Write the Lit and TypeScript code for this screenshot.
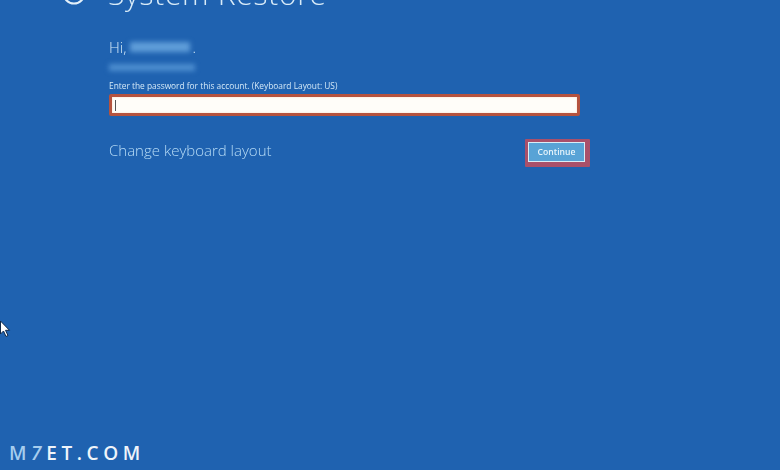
import { LitElement, html, css } from "lit";
import { customElement } from "lit/decorators.js";

@customElement("app-root")
export class AppRoot extends LitElement {
  static styles = css`
    :host { display: block; width: 780px; height: 470px; overflow: hidden; position: relative; background: #1f62b0; font-family: "Open Sans", "Noto Sans", sans-serif; color: #cfe6f7; }
    .page { display: flex; flex-direction: column; align-items: flex-start; padding-left: 62px; height: 470px; box-sizing: border-box; filter: blur(0.4px); }
    .header { display: flex; align-items: center; gap: 22px; height: 36px; margin-top: -24px; flex: none; }
    .back { width: 24px; height: 24px; flex: none; display: block; margin-top: -2px; }
    .title { font-size: 30px; font-weight: 300; line-height: 36px; color: #d8ebf8; letter-spacing: 0.7px; white-space: nowrap; }
    .form { margin-left: 47px; width: 481px; display: flex; flex-direction: column; margin-top: 25px; }
    .hi { display: flex; align-items: center; font-size: 15px; font-weight: 300; line-height: 20px; color: #d3e8f7; height: 20px; }
    .name { width: 60px; height: 10px; background: #5f9dd9; filter: blur(2.5px); margin-left: 4px; margin-right: 2px; }
    .mail { width: 86px; height: 7px; background: #4d8ed0; filter: blur(2.5px); margin-top: 7px; }
    .hint { font-size: 8.35px; line-height: 10px; margin-top: 10px; color: #d3e8f7; white-space: nowrap; }
    .input { box-sizing: border-box; width: 471px; height: 22px; margin-top: 3px; background: #fffdf9; border: 3px solid #b5533f; border-radius: 2px; box-shadow: inset 0 0 2px #f7d9bf; display: flex; align-items: center; padding-left: 3px; }
    .caret { width: 1px; height: 11px; background: #555; }
    .row { display: flex; justify-content: space-between; align-items: flex-start; margin-top: 23px; }
    .change { font-size: 15px; line-height: 20px; font-weight: 300; color: #b7dcf6; white-space: nowrap; margin-top: 1px; }
    .btnwrap { border-style: solid; border-color: #a9506a; border-width: 3px 5px 5px 3px; border-radius: 1px; flex: none; display: flex; }
    .btn { box-sizing: border-box; width: 57px; height: 20px; background: #58a3d6; border: 1px solid #d9eef7; color: #e8f5fb; font-size: 8.6px; font-weight: 600; display: flex; align-items: center; justify-content: center; font-family: inherit; padding: 0; }
    .mark { position: absolute; left: 9px; top: 441px; font-family: "Open Sans", sans-serif; font-weight: 600; font-size: 19px; line-height: 24px; letter-spacing: 4.6px; color: #eef4fa; white-space: nowrap; }
    .mark .m { color: #a6cdee; }
    .mark .s { color: #a6cdee; font-style: italic; }
    .cursor { position: absolute; left: 0; top: 320px; width: 11px; height: 18px; }
  `;

  render() {
    return html`
      <div class="page">
        <div class="header">
          <svg class="back" viewBox="0 0 24 24" fill="none" stroke="#e3f0fa" stroke-width="2"><circle cx="12" cy="12" r="10.5"></circle><path d="M6 12h12M11 7l-5 5 5 5"></path></svg>
          <div class="title">System Restore</div>
        </div>
        <div class="form">
          <div class="hi"><span>Hi,</span><span class="name"></span><span>.</span></div>
          <div class="mail"></div>
          <div class="hint">Enter the password for this account. (Keyboard Layout: US)</div>
          <div class="input"><span class="caret"></span></div>
          <div class="row">
            <div class="change">Change keyboard layout</div>
            <div class="btnwrap"><button class="btn">Continue</button></div>
          </div>
        </div>
      </div>
      <svg class="cursor" viewBox="0 0 11 18"><path d="M0.5 1v13l3-3 2.5 5.5 2-1-2.5-5.2h4z" fill="#fff" stroke="#10294a" stroke-width="1"></path></svg>
      <div class="mark"><span class="m">M</span><span class="s">7</span>ET.COM</div>
    `;
  }
}
